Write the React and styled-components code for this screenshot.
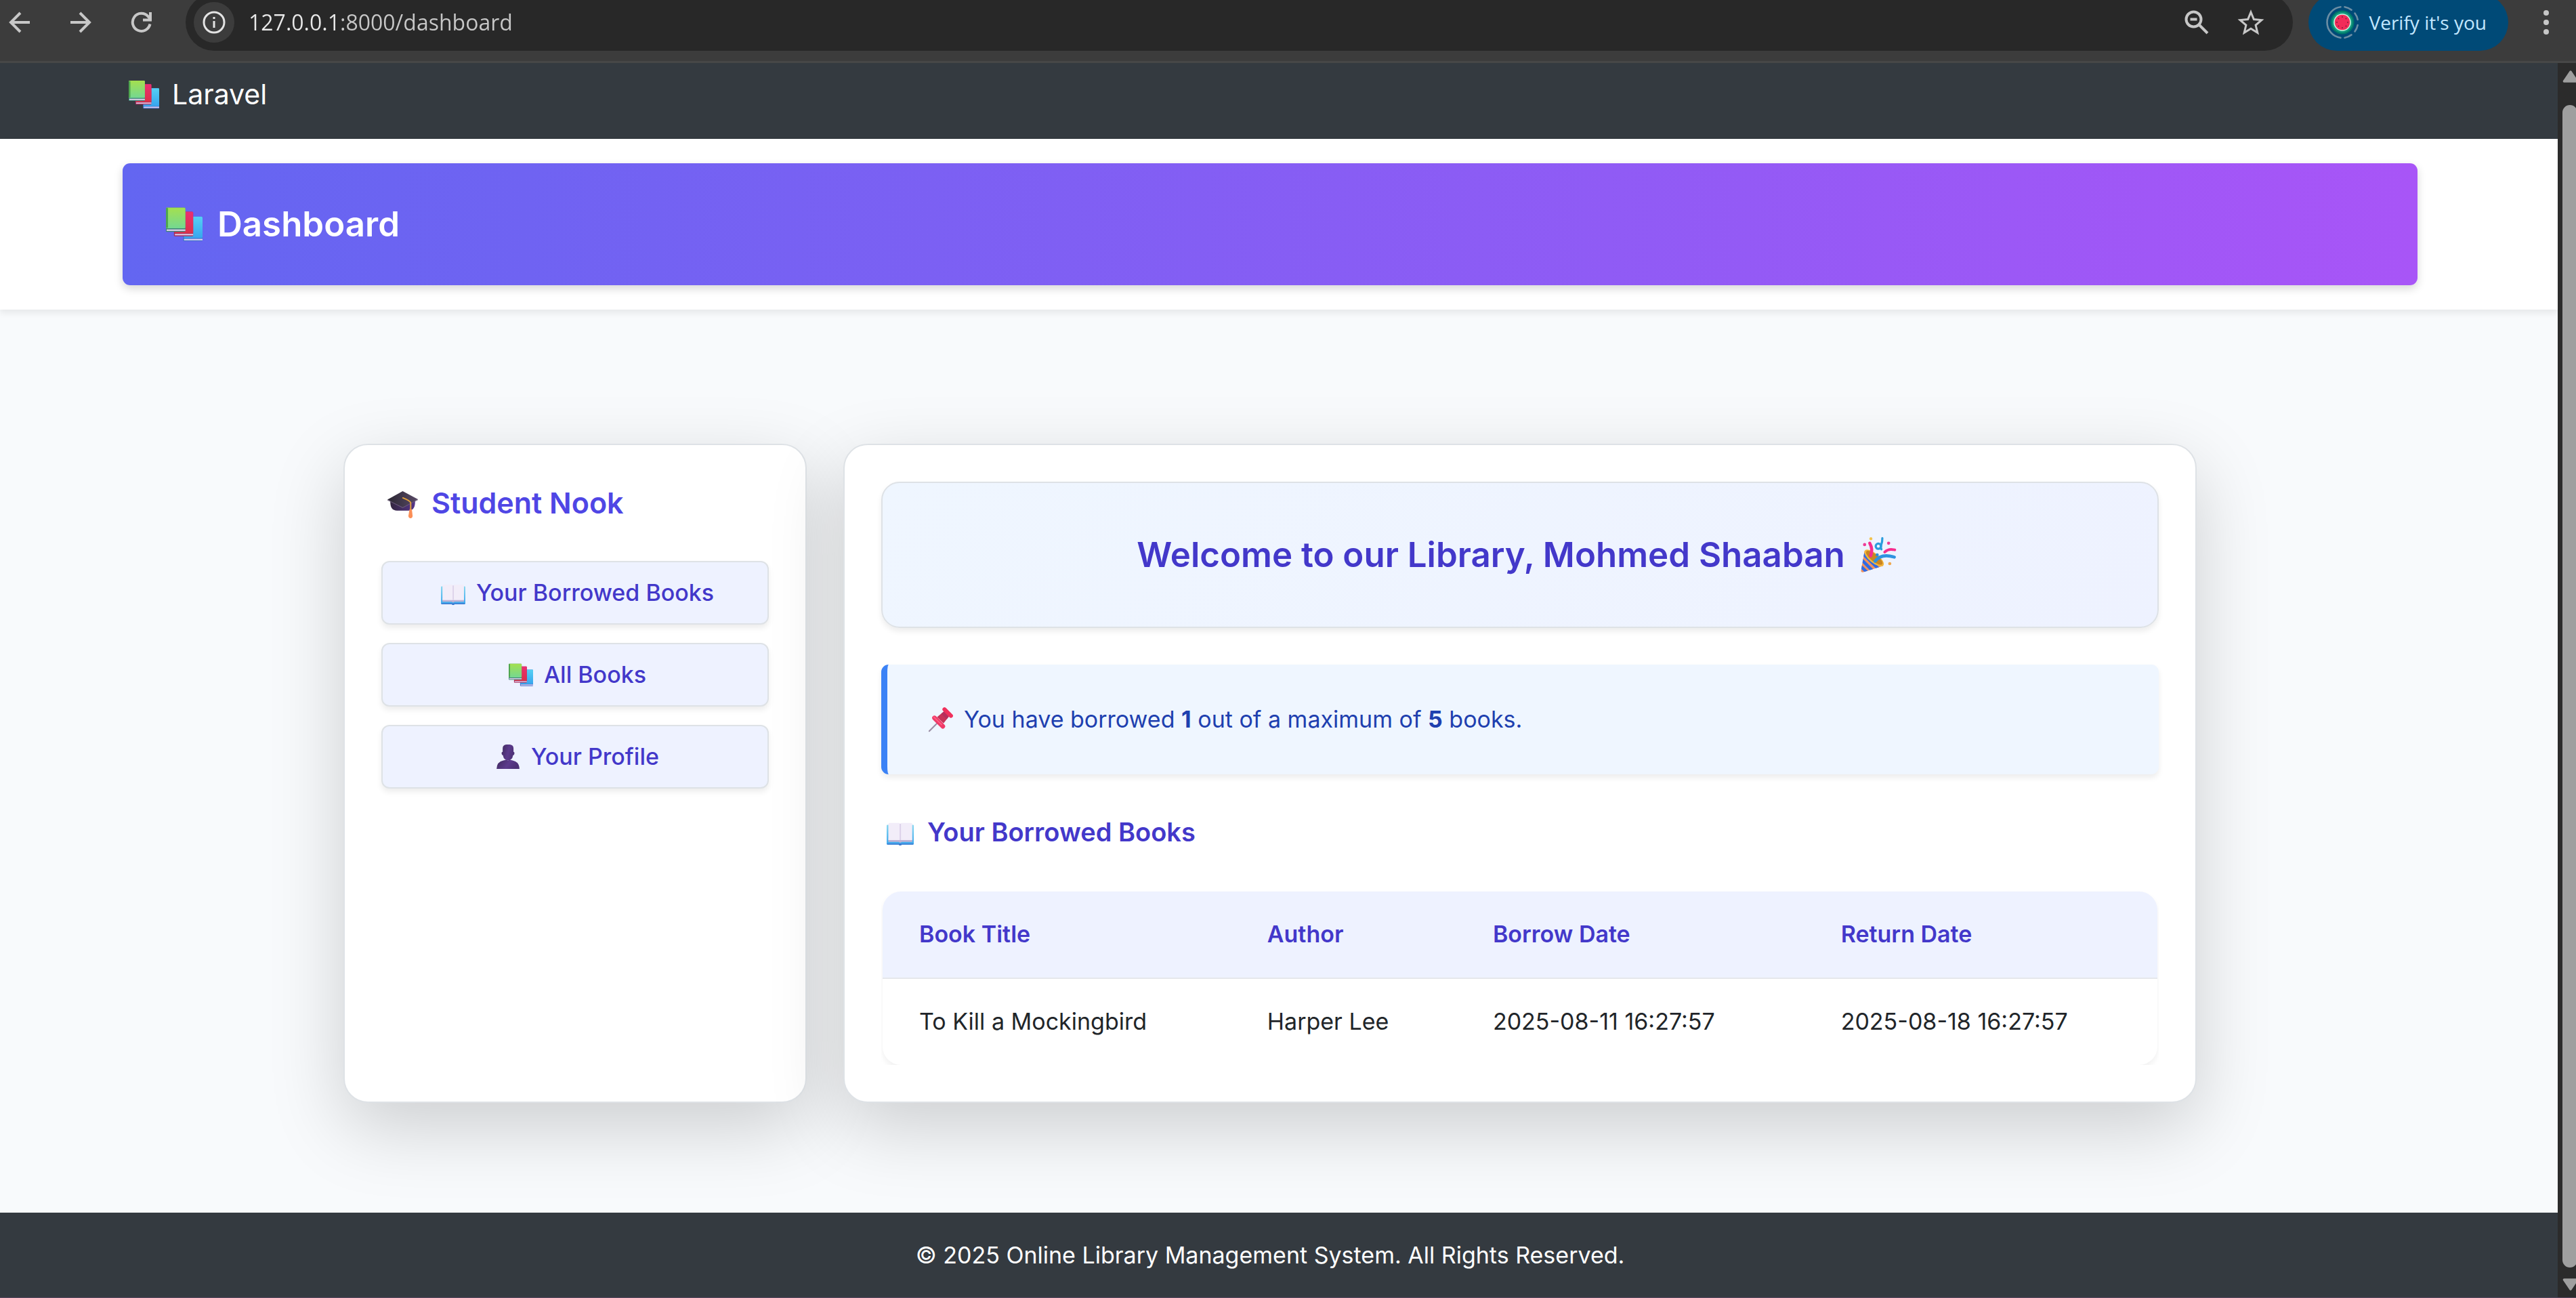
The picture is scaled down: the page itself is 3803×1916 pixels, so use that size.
import React from 'react';
import styled, { createGlobalStyle } from 'styled-components';

const GlobalStyle = createGlobalStyle`
  *, *::before, *::after { box-sizing: border-box; }
  body {
    margin: 0;
    overflow: hidden;
    background: #f8fafc;
    color: #212529;
    font-family: Inter, "Noto Sans", sans-serif;
    font-size: 34px;
    line-height: 54px;
  }
  h1, h2, h3, p { margin: 0; }
  a { color: inherit; text-decoration: none; }
  button { border: 0; padding: 0; background: none; color: inherit; font: inherit; cursor: pointer; }
`;

/* ---------- Browser frame ---------- */

const Shell = styled.div`
  display: flex;
  flex-direction: column;
  height: 100vh;
  overflow: hidden;
  border-bottom: 1px solid #584660;
`;

const Toolbar = styled.div`
  display: flex;
  flex: none;
  align-items: center;
  height: 93px;
  padding: 0 15px 24px 0;
  border-bottom: 3px solid #474747;
  background: #3c3c3c;
  color: #c7c7c7;
  font-family: "Open Sans", "Noto Sans", sans-serif;
`;

const ToolGroup = styled.div`
  display: flex;
  align-items: center;
  gap: ${(p) => p.$gap}px;
`;

const IconButton = styled.button`
  display: flex;
  align-items: center;
  justify-content: center;
  width: 58px;
  height: 60px;
`;

const SiteInfo = styled(IconButton)`
  width: 60px;
  border-radius: 50%;
  background: #3c3c3c;
  color: #e3e3e3;
`;

const AddressBar = styled.div`
  display: flex;
  flex: 1;
  align-items: center;
  gap: 21px;
  height: 84px;
  margin: 0 23px 0 36px;
  padding: 0 33px 0 12px;
  border-radius: 42px;
  background: #282828;
`;

const AddressInput = styled.input`
  flex: 1;
  min-width: 0;
  height: 60px;
  padding: 0 0 2px;
  border: 0;
  outline: 0;
  background: linear-gradient(90deg, #e8e8e8 136px, #c7c7c7 136px);
  background-clip: text;
  -webkit-background-clip: text;
  color: transparent;
  font-family: inherit;
  font-size: 32px;
`;

const VerifyButton = styled.button`
  display: flex;
  align-items: center;
  gap: 15px;
  height: 84px;
  margin-right: 27px;
  padding: 0 32px 0 25px;
  border-radius: 42px;
  background: #004a77;
  color: #c2e7ff;
  font-size: 28px;
  white-space: nowrap;
`;

const Viewport = styled.div`
  display: flex;
  flex: 1;
  min-height: 0;
`;

const ScrollTrack = styled.div`
  display: flex;
  flex: none;
  flex-direction: column;
  align-items: flex-start;
  gap: 16px;
  width: 27px;
  padding: 11px 0 10px 7px;
  overflow: hidden;
  background: #2b2b2b;
`;

const ScrollThumb = styled.div`
  flex: 1;
  width: 22px;
  margin-top: 17px;
  border-radius: 11px;
  background: #9f9f9f;
`;

/* ---------- Page ---------- */

const Page = styled.div`
  display: flex;
  flex: 1;
  flex-direction: column;
  min-width: 0;
`;

const NavBar = styled.nav`
  padding: 0 207px 20px 181px;
  background: #343a40;
  color: #fff;
  font-size: 41px;
  line-height: 92px;
`;

const Brand = styled.a`
  display: inline-flex;
  align-items: center;
  gap: 11px;
  vertical-align: top;
`;

const Header = styled.header`
  padding: 36px 207px 36px 181px;
  background: #fff;
  box-shadow: 0 5px 9px rgba(0, 0, 0, 0.075);
`;

const TitleBanner = styled.div`
  padding: 54px;
  border-radius: 11px;
  background: linear-gradient(90deg, #6366f1, #a855f7);
  box-shadow: 0 5px 13px rgba(0, 0, 0, 0.16);
  color: #fff;
`;

const Heading = styled.h2`
  display: flex;
  align-items: center;
  justify-content: ${(p) => (p.$center ? 'center' : 'flex-start')};
  gap: 12px;
  color: ${(p) => p.$color || 'inherit'};
  font-size: ${(p) => p.$size}px;
  font-weight: 600;
  line-height: ${(p) => p.$line}px;
`;

const Main = styled.main`
  flex: 1;
  padding: 198px 26px 162px 0;
`;

const Columns = styled.div`
  display: flex;
  gap: 54px;
  max-width: 2736px;
  margin: 0 auto;
`;

const Card = styled.section`
  display: flex;
  flex: ${(p) => (p.$side ? '0 0 25%' : '1')};
  flex-direction: column;
  gap: ${(p) => (p.$side ? 27 : 54)}px;
  min-width: 0;
  padding: 54px;
  border: 2px solid #dee2e6;
  border-radius: 36px;
  background: #fff;
  box-shadow: 0 36px 108px rgba(0, 0, 0, 0.175);
`;

const MenuList = styled.nav`
  display: flex;
  flex-direction: column;
  gap: 27px;
  margin-top: 28px;
`;

const MenuLink = styled.a`
  display: flex;
  align-items: center;
  justify-content: center;
  gap: 9px;
  height: 94px;
  border: 2px solid #dee2e6;
  border-radius: 12px;
  background: #eef2ff;
  box-shadow: 0 5px 9px rgba(0, 0, 0, 0.075);
  color: #4338ca;
  font-weight: 500;
`;

const Welcome = styled.div`
  padding: 70px 52px;
  border: 2px solid #dee2e6;
  border-radius: 27px;
  background: linear-gradient(135deg, #eff6ff, #eef2ff);
  box-shadow: 0 5px 9px rgba(0, 0, 0, 0.075);
`;

const Notice = styled.div`
  display: flex;
  align-items: center;
  gap: 9px;
  padding: 54px;
  border-left: 9px solid #3b82f6;
  border-radius: 11px;
  background: #eff6ff;
  box-shadow: 0 5px 9px rgba(0, 0, 0, 0.075);
  color: #1e40af;
`;

const TableWrap = styled.div`
  padding: 3px 2px 0;
  overflow: hidden;
`;

const TableFrame = styled.div`
  overflow: hidden;
  border-radius: 27px;
  box-shadow: 0 5px 9px rgba(0, 0, 0, 0.06);
`;

const Table = styled.table`
  width: 100%;
  border-collapse: collapse;
  table-layout: fixed;
  text-align: left;

  th, td {
    height: 128px;
    padding: 0 54px 2px;
    white-space: nowrap;
  }
  th {
    border-bottom: 2px solid #e5e7eb;
    background: #eef2ff;
    color: #4338ca;
    font-weight: 600;
  }
`;

const Col = styled.col`
  width: ${(p) => p.$width};
`;

const Footer = styled.footer`
  position: relative;
  padding: 36px 26px 35px 0;
  background: #343a40;
  color: #fff;
  text-align: center;
`;

/* ---------- Pictograms ---------- */

const Glyph = styled.span`
  display: inline-flex;
  flex: none;
  justify-content: center;
  width: ${(p) => p.$box}px;

  svg {
    display: block;
    width: ${(p) => p.$size}px;
    height: ${(p) => p.$size}px;
    overflow: visible;
  }
`;

const BOX = { 36: 50, 40: 56, 45: 62, 54: 74 };

const Emoji = ({ size = 36, art: Art }) => (
  <Glyph $size={size} $box={BOX[size]} aria-hidden="true">
    <Art />
  </Glyph>
);

const Books = () => (
  <svg viewBox="0 0 32 32">
    <defs>
      <linearGradient id="bkG" x1="0" y1="0" x2="0" y2="1">
        <stop offset="0" stopColor="#a4e04f" />
        <stop offset="1" stopColor="#74d891" />
      </linearGradient>
      <linearGradient id="bkR" x1="0" y1="0" x2="0" y2="1">
        <stop offset="0" stopColor="#ea2f72" />
        <stop offset="1" stopColor="#dc3048" />
      </linearGradient>
      <linearGradient id="bkB" x1="0" y1="0" x2="0" y2="1">
        <stop offset="0" stopColor="#55d0f4" />
        <stop offset="1" stopColor="#37a5ee" />
      </linearGradient>
    </defs>
    <rect x="15" y="9.4" width="17" height="21.4" rx="0.9" fill="#3c6fcb" />
    <rect x="15.6" y="9.4" width="16.4" height="18.8" rx="0.9" fill="url(#bkB)" />
    <rect x="15.8" y="28.8" width="16.2" height="1.3" fill="#dccff0" />
    <rect x="7" y="5.1" width="16.8" height="21.4" rx="0.9" fill="#a62a58" />
    <rect x="7.6" y="5.1" width="16.2" height="18.8" rx="0.9" fill="url(#bkR)" />
    <rect x="7.8" y="24.4" width="16" height="1.3" fill="#dcc6e4" />
    <rect x="0" y="1.5" width="17" height="21.2" rx="0.9" fill="#3d8377" />
    <rect x="0" y="1.5" width="17" height="18" rx="0.9" fill="url(#bkG)" />
    <rect x="0" y="1.7" width="1.8" height="17.6" rx="0.8" fill="#4ea64e" />
    <rect x="0.6" y="20.5" width="16.4" height="1.4" fill="#d9cfe6" />
  </svg>
);

const OpenBook = () => (
  <svg viewBox="0 0 32 32">
    <defs>
      <linearGradient id="obC" x1="0" y1="0" x2="0" y2="1">
        <stop offset="0" stopColor="#8ad8f0" />
        <stop offset="1" stopColor="#3aa6ee" />
      </linearGradient>
    </defs>
    <path d="M1 7.5h30q1 0 1 1V30q0 1-1 1H17.8l-1 1h-1.6l-1-1H1q-1 0-1-1V8.500q0-1 1-1z" fill="url(#obC)" />
    <path d="M0.300 29.800h31.400q-.2 1.200-.9 1.200H17.800l-1 1h-1.600l-1-1H1.200q-.7 0-.9-1.200z" fill="#3d78cf" />
    <path d="M2 23h28.200v4.800H18l-2 1-2-1H2z" fill="#bfb2d4" />
    <path d="M3.600 5.400h10.600q1.800 0 1.800 1.600 0-1.600 1.800-1.600h10.800q1.600 0 1.600 1.600v18.600H2V7q0-1.600 1.600-1.600z" fill="#f2edf9" />
    <path d="M15.300 6.400h1.600v19.200h-1.600z" fill="#dcd2ea" />
  </svg>
);

const Person = () => (
  <svg viewBox="0 0 32 32">
    <defs>
      <linearGradient id="psn" x1="0" y1="0" x2="1" y2="0.300">
        <stop offset="0" stopColor="#3f2a5e" />
        <stop offset="0.600" stopColor="#5c3b8c" />
        <stop offset="1" stopColor="#4d3176" />
      </linearGradient>
    </defs>
    <path d="M1 32q.3-9.600 9-11.200 2.200-.3 3.300-.8l2.700.9 2.700-.9q1.200.5 3.300.8 8.700 1.600 9 11.200z" fill="url(#psn)" />
    <path d="M9 5q0-4.600 5-5h4.600q4.600.8 4.600 5v4.600q1.600.3 1.200 2.400-.3 2-1.700 2-.6 4-2.900 5.600-1.600 1.200-3.800 1.200t-3.800-1.200Q9.900 18 9.300 14q-1.400 0-1.700-2-.4-2.100 1.400-2.400z" fill="url(#psn)" />
  </svg>
);

const GradCap = () => (
  <svg viewBox="0 0 32 32">
    <defs>
      <linearGradient id="gcT" x1="0" y1="0" x2="1" y2="0">
        <stop offset="0" stopColor="#2b2733" />
        <stop offset="1" stopColor="#594a66" />
      </linearGradient>
      <linearGradient id="gcB" x1="0" y1="0" x2="1" y2="0">
        <stop offset="0" stopColor="#33263f" />
        <stop offset="1" stopColor="#56368a" />
      </linearGradient>
    </defs>
    <path d="M3 12h26v3q0 9-7 9H10q-7 0-7-9z" fill="url(#gcB)" />
    <path d="M16 3.500 32 12 16 20.400 0 12.400z" fill="url(#gcT)" />
    <path d="M0 12.400 16 20.400 32 12v.8L16 21.400 0 13.200z" fill="#6a5b78" />
    <path d="M16.200 10.600q7.800 3 8.200 5.200V24" fill="none" stroke="#e2a13c" strokeWidth="1.400" strokeLinecap="round" />
    <path d="M23.200 22.500h2.400l.8 7q-.2 2.500-2.200 2.500T22 29.500z" fill="#fb8f57" />
  </svg>
);

const Pushpin = () => (
  <svg viewBox="0 0 32 32">
    <path d="M12.500 19.500.8 31.300" stroke="#9c8fa6" strokeWidth="1.900" strokeLinecap="round" />
    <path d="M11 12.800 20.500 5l6.600 6.400-7.600 9.600z" fill="#c73358" />
    <path d="M16.500 8.500 20.500 5l6.600 6.400-3.400 4.400z" fill="#b52f5c" />
    <path d="M7.600 14 18.600 25" stroke="#f03a68" strokeWidth="6" strokeLinecap="round" />
    <path d="M6.700 12.700 17 22.800" stroke="#ff6285" strokeWidth="1.500" strokeLinecap="round" />
    <path d="M20.800 2.800 29.200 11.200" stroke="#f0305c" strokeWidth="5.400" strokeLinecap="round" />
  </svg>
);

const PartyPopper = () => (
  <svg viewBox="0 0 32 32">
    <defs>
      <clipPath id="ppC">
        <path d="M4 12.500.9 29.600q-.2 1.900 1.700 1.600L20.300 25.600z" />
      </clipPath>
    </defs>
    <g clipPath="url(#ppC)">
      <path d="M0 10h24v22H0z" fill="#f0925f" />
      <path d="M1 13.500 18 30M0 18.800 14 33M0 25.500 8 33" stroke="#2f6be6" strokeWidth="2.700" />
    </g>
    <ellipse cx="12.300" cy="18.800" rx="10.400" ry="4.200" transform="rotate(39 12.300 18.800)" fill="#f2b53c" />
    <ellipse cx="12.500" cy="18.600" rx="8.900" ry="3.100" transform="rotate(39 12.500 18.600)" fill="#c98522" />
    <path d="M8.500 5.800q3 5.200.8 11" fill="none" stroke="#f72d8e" strokeWidth="2.700" strokeLinecap="round" />
    <path d="M13.200 21.600Q18.500 14.400 30 18" fill="none" stroke="#2f93e0" strokeWidth="2.700" strokeLinecap="round" />
    <path d="M21.600 13.600q3.400-3.400 8.800-1.900" fill="none" stroke="#f72d8e" strokeWidth="2.300" strokeLinecap="round" />
    <path d="M19.500 1.400q.1 3-1 6 -.6 2.200.2 3.700" fill="none" stroke="#2a9ddd" strokeWidth="1.900" strokeLinecap="round" />
    <circle cx="16" cy="8.500" r="2.300" fill="none" stroke="#2a9ddd" strokeWidth="1.900" />
    <circle cx="9.500" cy="1.900" r="1.300" fill="#f3c24c" />
    <circle cx="4" cy="7.100" r="1.400" fill="#ee3c98" />
    <circle cx="25" cy="5.800" r="1.400" fill="#ee3c98" />
    <circle cx="15" cy="16" r="1.400" fill="#2a8fd8" />
    <circle cx="26" cy="23.700" r="1.400" fill="#f0a850" />
  </svg>
);

const Stroke = ({ w, h, sw = 4, children }) => (
  <svg width={w} height={h} viewBox={`0 0 ${w} ${h}`} fill="none" stroke="currentColor" strokeWidth={sw} aria-hidden="true">
    {children}
  </svg>
);

const Avatar = () => (
  <svg width="50" height="50" viewBox="0 0 50 50" aria-hidden="true">
    <g fill="none" stroke="#6b8da4" strokeWidth="2.600" strokeLinecap="round">
      <path d="M22.500 2.200A23 23 0 0 0 22.500 47.800" />
      <path d="M28.500 2.300A23 23 0 0 1 38.500 6.600M43.500 11.500A23 23 0 0 1 47.700 21M47.700 29A23 23 0 0 1 43.500 38.500M38.500 43.400A23 23 0 0 1 28.500 47.700" />
    </g>
    <circle cx="25" cy="25" r="17.500" fill="#00796b" />
    <circle cx="25" cy="25" r="15.200" fill="#159a80" />
    <circle cx="25" cy="25" r="12.800" fill="#c9f5e0" />
    <circle cx="25" cy="25" r="11.200" fill="#f22b59" />
    <g fill="#7a1f38">
      <circle cx="25" cy="17" r="0.900" />
      <circle cx="25" cy="33" r="0.900" />
      <circle cx="17" cy="25" r="0.900" />
      <circle cx="33" cy="25" r="0.900" />
      <circle cx="19.500" cy="19.500" r="0.900" />
      <circle cx="30.500" cy="19.500" r="0.900" />
      <circle cx="19.500" cy="30.500" r="0.900" />
      <circle cx="30.500" cy="30.500" r="0.900" />
    </g>
  </svg>
);

const ScrollArrow = ({ down }) => (
  <svg width="24" height="18" viewBox="0 0 24 18" aria-hidden="true">
    <path
      d={down ? 'M2.500 2h19L12 16z' : 'M2.500 16h19L12 2z'}
      fill="#9f9f9f"
      stroke="#9f9f9f"
      strokeWidth="3.500"
      strokeLinejoin="round"
    />
  </svg>
);

/* ---------- Data ---------- */

const MENU = [
  { label: 'Your Borrowed Books', art: OpenBook },
  { label: 'All Books', art: Books },
  { label: 'Your Profile', art: Person },
];

const COLUMNS = [
  { label: 'Book Title', key: 'title', width: '27.3%' },
  { label: 'Author', key: 'author', width: '17.7%' },
  { label: 'Borrow Date', key: 'borrowed', width: '27.3%' },
  { label: 'Return Date', key: 'due', width: '27.7%' },
];

const LOANS = [
  {
    title: 'To Kill a Mockingbird',
    author: 'Harper Lee',
    borrowed: '2025-08-11 16:27:57',
    due: '2025-08-18 16:27:57',
  },
];

const BrowserToolbar = () => (
  <Toolbar>
    <ToolGroup $gap={32}>
      <IconButton aria-label="Back">
        <Stroke w={32} h={32}>
          <path d="M31 16H3M17 2 3 16 17 30" />
        </Stroke>
      </IconButton>
      <IconButton aria-label="Forward">
        <Stroke w={32} h={32}>
          <path d="M1 16H29M15 2 29 16 15 30" />
        </Stroke>
      </IconButton>
      <IconButton aria-label="Reload">
        <Stroke w={32} h={32}>
          <path d="M28.500 18.500A13 13 0 1 1 25.500 7.200L29 11M29 1v11.500H18" />
        </Stroke>
      </IconButton>
    </ToolGroup>
    <AddressBar>
      <SiteInfo aria-label="View site information">
        <Stroke w={34} h={34} sw={3}>
          <circle cx="17" cy="17" r="15" />
          <path d="M17 15v10M17 9v3" />
        </Stroke>
      </SiteInfo>
      <AddressInput aria-label="Address" defaultValue="127.0.0.1:8000/dashboard" />
      <ToolGroup $gap={22}>
        <IconButton aria-label="Zoom">
          <Stroke w={36} h={36}>
            <circle cx="13.500" cy="13.500" r="11" />
            <path d="M21.500 21.500 34 34M8.500 13.500h10" />
          </Stroke>
        </IconButton>
        <IconButton aria-label="Bookmark this tab">
          <Stroke w={40} h={38} sw={3}>
            <path d="m20 4 4.400 10.600 11.400 1-8.700 7.500 2.700 11.200L20 28.300l-9.800 6 2.700-11.200-8.700-7.500 11.400-1z" />
          </Stroke>
        </IconButton>
      </ToolGroup>
    </AddressBar>
    <VerifyButton>
      <Avatar />
      Verify it's you
    </VerifyButton>
    <IconButton aria-label="Menu">
      <svg width="8" height="36" viewBox="0 0 8 36" fill="currentColor" aria-hidden="true">
        <circle cx="4" cy="4" r="4" />
        <circle cx="4" cy="18" r="4" />
        <circle cx="4" cy="32" r="4" />
      </svg>
    </IconButton>
  </Toolbar>
);

const BorrowedTable = () => (
  <TableWrap>
    <TableFrame>
      <Table>
        <colgroup>
          {COLUMNS.map((c) => (
            <Col key={c.key} $width={c.width} />
          ))}
        </colgroup>
        <thead>
          <tr>
            {COLUMNS.map((c) => (
              <th key={c.key} scope="col">{c.label}</th>
            ))}
          </tr>
        </thead>
        <tbody>
          {LOANS.map((loan) => (
            <tr key={loan.title}>
              {COLUMNS.map((c) => (
                <td key={c.key}>{loan[c.key]}</td>
              ))}
            </tr>
          ))}
        </tbody>
      </Table>
    </TableFrame>
  </TableWrap>
);

export default function App() {
  return (
    <>
      <GlobalStyle />
      <Shell>
        <BrowserToolbar />
        <Viewport>
          <Page>
            <NavBar>
              <Brand href="#">
                <Emoji size={45} art={Books} />
                Laravel
              </Brand>
            </NavBar>
            <Header>
              <TitleBanner>
                <Heading as="h1" $size={51} $line={72}>
                  <Emoji size={54} art={Books} />
                  Dashboard
                </Heading>
              </TitleBanner>
            </Header>
            <Main>
              <Columns>
                <Card $side>
                  <Heading $size={43} $line={62} $color="#4f46e5">
                    <Emoji size={45} art={GradCap} />
                    Student Nook
                  </Heading>
                  <MenuList>
                    {MENU.map((item) => (
                      <MenuLink key={item.label} href="#">
                        <Emoji art={item.art} />
                        {item.label}
                      </MenuLink>
                    ))}
                  </MenuList>
                </Card>
                <Card>
                  <Welcome>
                    <Heading $size={51} $line={72} $color="#4338ca" $center>
                      Welcome to our Library, Mohmed Shaaban
                      <Emoji size={54} art={PartyPopper} />
                    </Heading>
                  </Welcome>
                  <Notice>
                    <Emoji art={Pushpin} />
                    <p>
                      You have borrowed <strong>1</strong> out of a maximum of <strong>5</strong> books.
                    </p>
                  </Notice>
                  <Heading as="h3" $size={38} $line={62} $color="#4338ca">
                    <Emoji size={40} art={OpenBook} />
                    Your Borrowed Books
                  </Heading>
                  <BorrowedTable />
                </Card>
              </Columns>
            </Main>
            <Footer>© 2025 Online Library Management System. All Rights Reserved.</Footer>
          </Page>
          <ScrollTrack>
            <ScrollArrow />
            <ScrollThumb />
            <ScrollArrow down />
          </ScrollTrack>
        </Viewport>
      </Shell>
    </>
  );
}
